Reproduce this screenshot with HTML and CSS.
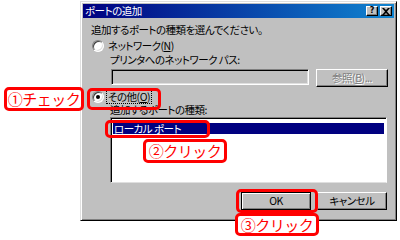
FILE: index.html
```html
<!DOCTYPE html>
<html lang="ja">
<head>
<meta charset="utf-8">
<link rel="stylesheet" href="styles.css">
</head>
<body>
<div class="dialog">
  <div class="titlebar">
    <span class="title">ポートの追加</span>
    <div class="tbtns">
      <span class="tbtn">?</span>
      <span class="tbtn x">
        <svg width="8" height="7" viewBox="0 0 8 7"><path d="M0 0h2l2 2 2-2h2L5 3.5 8 7H6L4 5 2 7H0l3-3.5z" fill="#000"/></svg>
      </span>
    </div>
  </div>
  <div class="content">
    <div class="line intro">追加するポートの種類を選んでください。</div>
    <div class="line radio-row"><span class="radio"></span><span class="rlabel">ネットワーク(<u>N</u>)</span></div>
    <div class="line indent">プリンタへのネットワーク パス:</div>
    <div class="path-row">
      <div class="textbox"></div>
      <div class="btn disabled">参照(<u>B</u>)...</div>
    </div>
    <div class="line radio-row r2"><span class="radio on"></span><span class="rlabel focus">その他(<u>O</u>)</span></div>
    <div class="line indent lbl2">追加するポートの種類:</div>
    <div class="listbox">
      <div class="item sel">ローカル ポート</div>
    </div>
    <div class="actions">
      <div class="btn default">OK</div>
      <div class="btn">キャンセル</div>
    </div>
  </div>
</div>

<div class="hl hl1"></div>
<div class="hl hl2"></div>
<div class="hl hl3"></div>
<div class="callout c1">①チェック</div>
<div class="callout c2">②クリック</div>
<div class="callout c3">③クリック</div>
</body>
</html>
```

FILE: styles.css
```css
* { box-sizing: border-box; }
html, body { margin: 0; padding: 0; }
body {
  width: 400px;
  height: 240px;
  background: #fff;
  position: relative;
  overflow: hidden;
  font-family: "Noto Sans CJK JP", "Noto Sans", sans-serif;
  font-feature-settings: "palt";
  font-size: 10.5px;
  letter-spacing: -0.5px;
  color: #000;
}
.dialog {
  margin: 1px 0 0 80px;
  width: 317px;
  height: 220px;
  background: #c0c0c0;
  border-top: 1px solid #dfdfdf;
  border-left: 1px solid #dfdfdf;
  border-right: 1px solid #000;
  border-bottom: 1px solid #000;
  box-shadow: inset 1px 1px #fff, inset -1px -1px #808080;
  padding: 2px;
}
.titlebar {
  height: 14px;
  background: linear-gradient(to right, #000080, #1084d0);
  display: flex;
  align-items: center;
  justify-content: space-between;
  padding: 0 2px 0 2px;
}
.title {
  color: #fff;
  font-size: 10.5px;
  line-height: 14px;
}
.tbtns { display: flex; gap: 2px; }
.tbtn {
  width: 12px;
  height: 10px;
  background: #c0c0c0;
  border-top: 1px solid #fff;
  border-left: 1px solid #fff;
  border-right: 1px solid #000;
  border-bottom: 1px solid #000;
  box-shadow: inset -1px -1px #808080;
  font-family: "DejaVu Sans", sans-serif;
  font-size: 8px;
  font-weight: bold;
  letter-spacing: 0;
  line-height: 8px;
  text-align: center;
  display: flex;
  align-items: center;
  justify-content: center;
}
.content {
  padding: 4px 6px 0 8px;
}
.line {
  height: 14px;
  line-height: 14px;
  white-space: nowrap;
}
.intro { margin-top: 1px; }
.radio-row {
  display: flex;
  align-items: center;
  margin-top: 2px;
}
.radio {
  width: 12px;
  height: 12px;
  border-radius: 50%;
  background: #fff;
  border: 1px solid;
  border-color: #808080 #fff #fff #808080;
  box-shadow: inset 1px 1px #404040, inset -1px -1px #dfdfdf;
  margin-left: 1px;
  margin-right: 3px;
  display: flex;
  align-items: center;
  justify-content: center;
  flex: none;
}
.radio.on::after {
  content: "";
  width: 4px;
  height: 4px;
  border-radius: 50%;
  background: #000;
}
.rlabel { padding: 0 1px; line-height: 12px; }
.focus { outline: 1px dotted #000; }
.indent { padding-left: 19px; }
.path-row {
  display: flex;
  align-items: flex-start;
  margin-top: 2px;
  padding-left: 20px;
}
.textbox {
  width: 198px;
  height: 16px;
  background: #c0c0c0;
  border-top: 1px solid #808080;
  border-left: 1px solid #808080;
  border-right: 1px solid #fff;
  border-bottom: 1px solid #fff;
  box-shadow: inset 1px 1px #000, inset -1px -1px #dfdfdf;
}
.btn {
  height: 18px;
  background: #c0c0c0;
  border-top: 1px solid #fff;
  border-left: 1px solid #fff;
  border-right: 1px solid #000;
  border-bottom: 1px solid #000;
  box-shadow: inset -1px -1px #808080;
  text-align: center;
  line-height: 16px;
}
.path-row .btn {
  width: 72px;
  margin-left: 7px;
}
.disabled {
  color: #808080;
  text-shadow: 1px 1px #fff;
}
.r2 { margin-top: 3px; height: 13px; line-height: 13px; }
.lbl2 { margin-top: 0; height: 13px; line-height: 13px; }
.listbox {
  margin: 1px 0 0 19px;
  width: 277px;
  height: 66px;
  background: #fff;
  border-top: 1px solid #808080;
  border-left: 1px solid #808080;
  border-right: 1px solid #fff;
  border-bottom: 1px solid #dfdfdf;
  box-shadow: inset 1px 1px #000;
  padding: 5px 2px 0 2px;
}
.item {
  height: 11px;
  line-height: 11px;
  padding-left: 1px;
  white-space: nowrap;
}
.sel { background: #000080; color: #fff; }
.actions {
  display: flex;
  justify-content: flex-end;
  gap: 6px;
  margin-top: 9px;
  padding-right: 1px;
}
.actions .btn { width: 70px; }
.actions .btn.default {
  border: 1px solid #000;
  box-shadow: inset 1px 1px #fff, inset -1px -1px #808080;
}
.hl, .callout {
  position: absolute;
  border: 3px solid #f00;
  border-radius: 5px;
}
.callout {
  background: #fff;
  color: #f00;
  font-size: 15px;
  font-feature-settings: normal;
  letter-spacing: -0.5px;
  line-height: 18px;
  display: flex;
  align-items: center;
  justify-content: center;
  white-space: nowrap;
}
.hl1 { left: 87px; top: 88px; width: 74px; height: 22px; }
.hl2 { left: 105px; top: 120px; width: 105px; height: 18px; }
.hl3 { left: 236px; top: 189px; width: 82px; height: 24px; }
.c1 { left: 4px; top: 87px; width: 80px; height: 24px; }
.c2 { left: 143px; top: 139px; width: 84px; height: 24px; }
.c3 { left: 235px; top: 213px; width: 84px; height: 23px; }
```
